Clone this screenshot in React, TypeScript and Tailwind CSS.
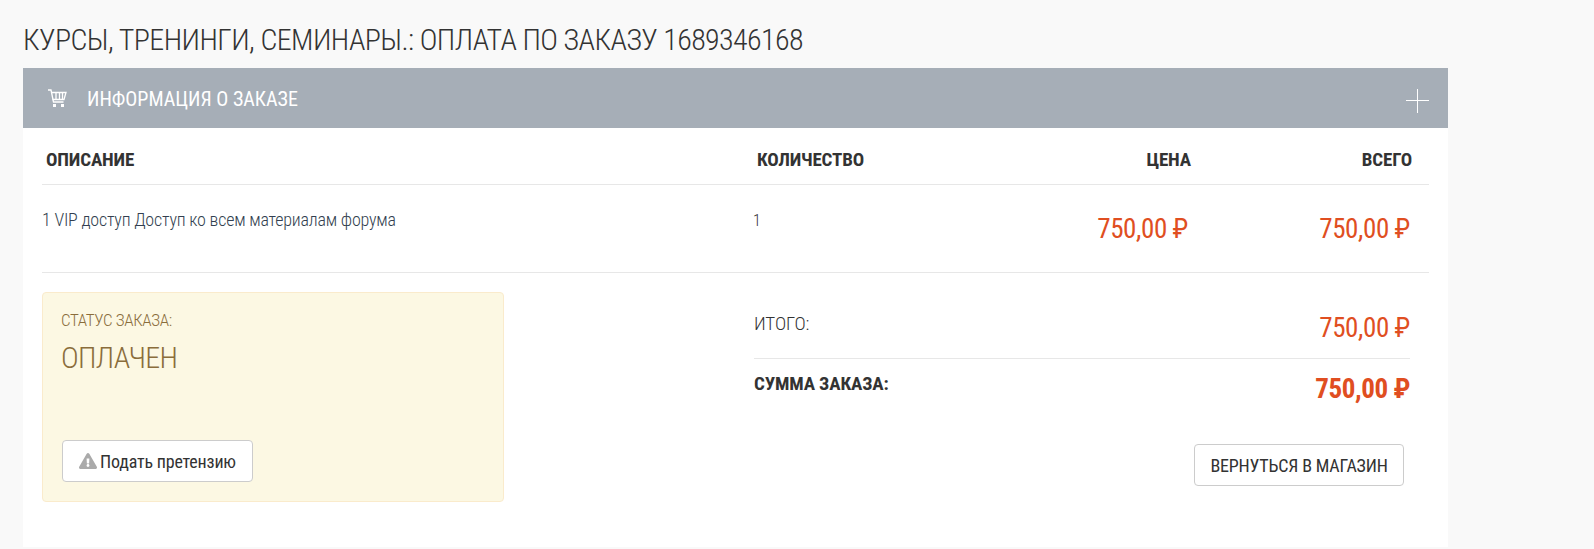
import { FaExclamationTriangle } from "react-icons/fa";

function CartIcon() {
    return (
        <svg width="20" height="19" viewBox="0 0 20 19" fill="none" stroke="white" strokeWidth="1.3">
            <path d="M1 1h3l2.500 12h10" />
            <path d="M4.500 3.500h14.500l-2 7h-11.500" />
            <path d="M9 3.500v7M12.500 3.500v7M15.500 3.500v7" />
            <rect x="6" y="15" width="3" height="3" fill="white" stroke="none" />
            <rect x="14" y="15" width="3" height="3" fill="white" stroke="none" />
        </svg>
    );
}

export default function App() {
    return (
        <div className="h-[549px] overflow-hidden bg-[#f9f9f9] pl-[23px] font-['Roboto',sans-serif] [font-stretch:75%]">
            <h1 className="pt-[23px] pb-[11px] text-[30px] leading-[34px] font-light tracking-[-0.6px] text-[#333333]">
                КУРСЫ, ТРЕНИНГИ, СЕМИНАРЫ.: ОПЛАТА ПО ЗАКАЗУ 1689346168
            </h1>
            <div className="h-[479px] w-[1425px] bg-white">
                <div className="flex h-[60px] items-center bg-[#a6aeb7] pr-[19px] pl-[24px] text-white">
                    <CartIcon />
                    <span className="ml-[20px] pt-[2px] text-[20px] font-normal">ИНФОРМАЦИЯ О ЗАКАЗЕ</span>
                    <span className="relative mt-[6px] ml-auto block h-[24px] w-[23px]">
                        <span className="absolute top-[11px] left-0 h-px w-[23px] bg-white" />
                        <span className="absolute top-0 left-[11px] h-[24px] w-px bg-white" />
                    </span>
                </div>
                <div className="px-[19px]">
                    <div className="flex h-[57px] items-center border-b border-[#e7e7e7] pt-[9px] text-[19px] font-bold tracking-[-0.15px] text-[#333333]">
                        <div className="w-[711px] pl-1">ОПИСАНИЕ</div>
                        <div className="w-[220px] pl-1">КОЛИЧЕСТВО</div>
                        <div className="w-[218px] text-right">ЦЕНА</div>
                        <div className="w-[221px] text-right">ВСЕГО</div>
                    </div>
                    <div className="flex h-[88px] border-b border-[#e7e7e7]">
                        <div className="w-[711px] pt-[25px] text-[18px] leading-[20px] font-light tracking-[-0.21px] text-[#333f50]">
                            1 VIP доступ Доступ ко всем материалам форума
                        </div>
                        <div className="w-[220px] pt-[26px] text-[16px] leading-[20px] font-light text-[#333333]">1</div>
                        <div className="w-[218px] pt-[28px] pr-[3px] text-right text-[27px] leading-[32px] font-normal tracking-[-0.4px] text-[#e04e21]">
                            750,00 ₽
                        </div>
                        <div className="w-[221px] pt-[28px] pr-[2px] text-right text-[27px] leading-[32px] font-normal tracking-[-0.4px] text-[#e04e21]">
                            750,00 ₽
                        </div>
                    </div>
                    <div className="flex pt-[19px]">
                        <div className="flex h-[210px] w-[462px] flex-col rounded border border-[#faebcc] bg-[#fcf8e3] pt-[17px] pl-[18px] text-[#8a6d3b]">
                            <div className="text-[17px] leading-[20px] font-light tracking-[-0.35px]">СТАТУС ЗАКАЗА:</div>
                            <div className="mt-[8px] text-[30px] leading-[40px] font-light tracking-[-0.7px]">ОПЛАЧЕН</div>
                            <button className="mt-[62px] ml-px flex h-[42px] w-[191px] items-center justify-center gap-[3px] rounded border border-[#cccccc] bg-white text-[18px] tracking-[-0.2px] text-[#333333]">
                                <FaExclamationTriangle className="text-[18px] text-[#aaaaaa]" />
                                Подать претензию
                            </button>
                        </div>
                        <div className="ml-[250px] w-[656px]">
                            <div className="flex h-[67px] items-start justify-between border-b border-[#e7e7e7]">
                                <span className="pt-[20px] text-[19px] leading-[24px] font-light tracking-[-0.1px] text-[#333333]">ИТОГО:</span>
                                <span className="pt-[20px] text-[27px] leading-[32px] font-normal tracking-[-0.4px] text-[#e04e21]">750,00 ₽</span>
                            </div>
                            <div className="flex h-[59px] items-start justify-between">
                                <span className="pt-[13px] text-[19px] leading-[24px] font-bold tracking-[-0.15px] text-[#333333]">СУММА ЗАКАЗА:</span>
                                <span className="pt-[14px] text-[27px] leading-[32px] font-bold tracking-[-0.4px] text-[#e04e21]">750,00 ₽</span>
                            </div>
                            <div className="mt-[26px] flex justify-end pr-[6px]">
                                <button className="h-[42px] w-[210px] rounded border border-[#cccccc] bg-white text-[18px] font-normal tracking-[-0.2px] text-[#333333]">
                                    ВЕРНУТЬСЯ В МАГАЗИН
                                </button>
                            </div>
                        </div>
                    </div>
                </div>
            </div>
        </div>
    );
}
